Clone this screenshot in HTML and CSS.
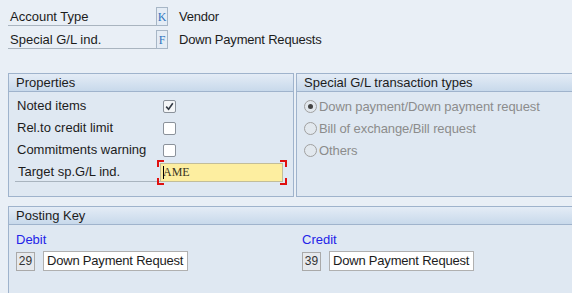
FILE: index.html
```html
<!DOCTYPE html>
<html>
<head>
<meta charset="utf-8">
<link rel="stylesheet" href="styles.css">
</head>
<body>
<div class="page">
  <div class="top">
    <div class="trow">
      <div class="tlabel">Account Type</div>
      <div class="keybox">K</div>
      <div class="tval">Vendor</div>
    </div>
    <div class="trow">
      <div class="tlabel">Special G/L ind.</div>
      <div class="keybox">F</div>
      <div class="tval">Down Payment Requests</div>
    </div>
  </div>

  <div class="groups">
    <div class="group props">
      <div class="ghead">Properties</div>
      <div class="gbody">
        <div class="prow"><span class="plabel">Noted items</span><span class="cb checked"><svg width="9" height="9" viewBox="0 0 9 9"><path d="M1.2 4.6 L3.6 7.2 L7.8 1.2" fill="none" stroke="#333a44" stroke-width="1.6"/></svg></span></div>
        <div class="prow"><span class="plabel">Rel.to credit limit</span><span class="cb"></span></div>
        <div class="prow"><span class="plabel">Commitments warning</span><span class="cb"></span></div>
        <div class="prow last"><span class="plabel ul">Target sp.G/L ind.</span>
          <span class="focuswrap">
            <span class="fc tl"></span><span class="fc tr"></span><span class="fc bl"></span><span class="fc br"></span>
            <span class="yinput"><span class="caret"></span>AME</span>
          </span>
        </div>
      </div>
    </div>
    <div class="group types">
      <div class="ghead">Special G/L transaction types</div>
      <div class="gbody">
        <div class="rrow"><span class="radio on"></span>Down payment/Down payment request</div>
        <div class="rrow"><span class="radio"></span>Bill of exchange/Bill request</div>
        <div class="rrow"><span class="radio"></span>Others</div>
      </div>
    </div>
  </div>

  <div class="group posting">
    <div class="ghead">Posting Key</div>
    <div class="pbody">
      <div class="pcol">
        <div class="plink">Debit</div>
        <div class="pfields"><span class="code">29</span><span class="tinput">Down Payment Request</span></div>
      </div>
      <div class="pcol">
        <div class="plink">Credit</div>
        <div class="pfields"><span class="code">39</span><span class="tinput">Down Payment Request</span></div>
      </div>
    </div>
  </div>
</div>
</body>
</html>
```
FILE: styles.css
```css
html, body {
  margin: 0;
  padding: 0;
  background: #e9eff6;
  font-family: "Liberation Sans", Arial, sans-serif;
  font-size: 13px;
  color: #1c1c1c;
  overflow: hidden;
}
.page {
  width: 572px;
  height: 293px;
  overflow: hidden;
}
.top {
  padding: 7px 0 0 8px;
  display: flex;
  flex-direction: column;
  gap: 4px;
}
.trow {
  display: flex;
  align-items: stretch;
  height: 19px;
}
.tlabel {
  width: 146px;
  padding-left: 2px;
  border-bottom: 1px solid #a9b4bf;
  line-height: 20px;
}
.keybox {
  width: 10px;
  height: 17px;
  border: 1px solid #a7b6c6;
  background: #e4ecf5;
  color: #2f74c0;
  font-family: "Liberation Serif", serif;
  font-size: 12px;
  line-height: 18px;
  text-align: center;
}
.tval {
  margin-left: 11px;
  line-height: 20px;
  letter-spacing: -0.2px;
}
.groups {
  display: flex;
  gap: 2px;
  margin-top: 24px;
  margin-left: 8px;
}
.group {
  border: 1px solid #9fb3cc;
  background: #dfe8f2;
  box-sizing: border-box;
}
.props {
  width: 286px;
  height: 124px;
}
.types {
  flex: 1;
  height: 124px;
  margin-right: -4px;
}
.ghead {
  height: 17px;
  line-height: 17px;
  padding-left: 7px;
  background: linear-gradient(#e4ecf6, #c8d9eb);
  border-bottom: 1px solid #9fb3cc;
}
.gbody {
  padding-top: 3px;
}
.prow {
  display: flex;
  align-items: center;
  height: 22px;
  padding-left: 8px;
}
.plabel {
  width: 146px;
  line-height: 20px;
}
.prow.last {
  align-items: flex-start;
}
.plabel.ul {
  width: 143px;
  padding-left: 3px;
  border-bottom: 1px solid #a9b4bf;
  line-height: 18px;
  margin-top: 2px;
  margin-left: -2px;
}
.cb {
  width: 11px;
  height: 11px;
  border: 1px solid #8b929b;
  border-radius: 2px;
  background: #fff;
  display: flex;
  align-items: center;
  justify-content: center;
  margin-top: 1px;
}
.cb.checked {
  background: #f4f6f8;
}
.focuswrap {
  position: relative;
  padding: 3px 4px 3px 3px;
  margin-left: -4px;
  margin-top: -1px;
}
.fc {
  position: absolute;
  width: 5px;
  height: 5px;
  border-color: #e01010;
  border-style: solid;
  border-width: 0;
}
.fc.tl { left: 0; top: 0; border-left-width: 2px; border-top-width: 2px; }
.fc.tr { right: 0; top: 0; border-right-width: 2px; border-top-width: 2px; }
.fc.bl { left: 0; bottom: 0; border-left-width: 2px; border-bottom-width: 2px; }
.fc.br { right: 0; bottom: 0; border-right-width: 2px; border-bottom-width: 2px; }
.yinput {
  display: flex;
  align-items: center;
  width: 123px;
  height: 19px;
  box-sizing: border-box;
  background: #fdeea0;
  border: 1px solid #c2bd9a;
  font-family: "Liberation Serif", serif;
  font-size: 12px;
  color: #3a3420;
  padding-left: 2px;
  position: relative;
}
.caret {
  position: absolute;
  left: 2px;
  top: 2px;
  width: 1px;
  height: 13px;
  background: #000;
}
.rrow {
  display: flex;
  align-items: center;
  height: 22px;
  padding-left: 7px;
  color: #8c8c8c;
  letter-spacing: -0.1px;
}
.radio {
  width: 11px;
  height: 11px;
  border: 1px solid #a0a0a0;
  border-radius: 50%;
  margin-right: 2px;
  position: relative;
  background: #e2e8ee;
}
.radio.on::after {
  content: "";
  position: absolute;
  left: 3px;
  top: 3px;
  width: 5px;
  height: 5px;
  border-radius: 50%;
  background: #444;
}
.posting {
  margin: 9px -4px 0 8px;
  height: 100px;
}
.pbody {
  display: flex;
  padding: 7px 0 0 7px;
}
.pcol {
  width: 286px;
  flex-shrink: 0;
}
.plink {
  color: #2424e8;
  height: 16px;
  line-height: 16px;
}
.pfields {
  display: flex;
  gap: 8px;
  margin-top: 3px;
  align-items: center;
}
.code {
  width: 19px;
  height: 19px;
  box-sizing: border-box;
  border: 1px solid #a9a9a9;
  background: #e6e9ed;
  font-size: 12px;
  line-height: 17px;
  text-align: center;
  color: #333;
}
.tinput {
  width: 145px;
  height: 20px;
  box-sizing: border-box;
  border: 1px solid #b0b0b0;
  background: #fff;
  line-height: 18px;
  padding-left: 3px;
  white-space: nowrap;
  overflow: hidden;
  letter-spacing: -0.2px;
}
```
